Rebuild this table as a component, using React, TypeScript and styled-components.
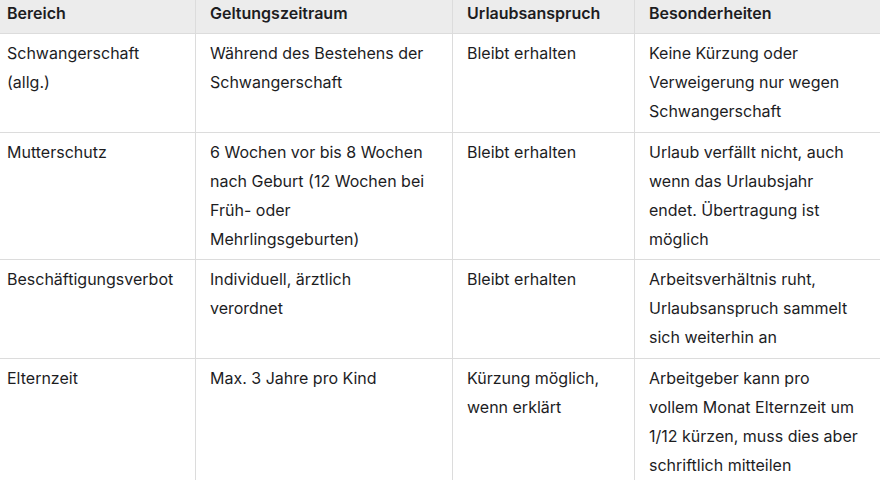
import React from "react";
import styled, { createGlobalStyle } from "styled-components";

const Global = createGlobalStyle`
  html, body { margin: 0; padding: 0; background: #ffffff; overflow: hidden; }
  body { font-family: Inter, "Noto Sans", "Liberation Sans", sans-serif; }
`;

const Viewport = styled.div`
  width: 880px;
  height: 480px;
  overflow: hidden;
  background: #ffffff;
`;

const Table = styled.table`
  border-collapse: collapse;
  table-layout: fixed;
  width: 895px;
  margin: -7px 0 0 -8px;
  font-size: 16px;
  line-height: 29px;
  color: #1d1d1f;
`;

const Col = styled.col<{ $w: number }>`
  width: ${(p) => p.$w}px;
`;

const HeadCell = styled.th`
  background: #ececec;
  border: 1px solid #dcdcdc;
  text-align: left;
  font-weight: 600;
  padding: 5px 14px 5px 14px;
  vertical-align: top;
`;

const Cell = styled.td`
  border: 1px solid #dcdcdc;
  padding: 5px 14px 5.5px 14px;
  vertical-align: top;
  font-weight: 400;
`;

type Row = string[][];

const head = ["Bereich", "Geltungszeitraum", "Urlaubsanspruch", "Besonderheiten"];

const rows: Row[] = [
  [
    ["Schwangerschaft", "(allg.)"],
    ["Während des Bestehens der", "Schwangerschaft"],
    ["Bleibt erhalten"],
    ["Keine Kürzung oder", "Verweigerung nur wegen", "Schwangerschaft"],
  ],
  [
    ["Mutterschutz"],
    ["6 Wochen vor bis 8 Wochen", "nach Geburt (12 Wochen bei", "Früh- oder", "Mehrlingsgeburten)"],
    ["Bleibt erhalten"],
    ["Urlaub verfällt nicht, auch", "wenn das Urlaubsjahr", "endet. Übertragung ist", "möglich"],
  ],
  [
    ["Beschäftigungsverbot"],
    ["Individuell, ärztlich", "verordnet"],
    ["Bleibt erhalten"],
    ["Arbeitsverhältnis ruht,", "Urlaubsanspruch sammelt", "sich weiterhin an"],
  ],
  [
    ["Elternzeit"],
    ["Max. 3 Jahre pro Kind"],
    ["Kürzung möglich,", "wenn erklärt"],
    ["Arbeitgeber kann pro", "vollem Monat Elternzeit um", "1/12 kürzen, muss dies aber", "schriftlich mitteilen"],
  ],
];

const Lines = ({ lines }: { lines: string[] }) => (
  <>
    {lines.map((l, i) => (
      <React.Fragment key={i}>
        {i > 0 && <br />}
        {l}
      </React.Fragment>
    ))}
  </>
);

export default function App() {
  return (
    <Viewport>
      <Global />
      <Table>
        <colgroup>
          <Col $w={203} />
          <Col $w={257} />
          <Col $w={182} />
          <Col $w={253} />
        </colgroup>
        <thead>
          <tr>
            {head.map((h) => (
              <HeadCell key={h}>{h}</HeadCell>
            ))}
          </tr>
        </thead>
        <tbody>
          {rows.map((r, i) => (
            <tr key={i}>
              {r.map((c, j) => (
                <Cell key={j}>
                  <Lines lines={c} />
                </Cell>
              ))}
            </tr>
          ))}
        </tbody>
      </Table>
    </Viewport>
  );
}
